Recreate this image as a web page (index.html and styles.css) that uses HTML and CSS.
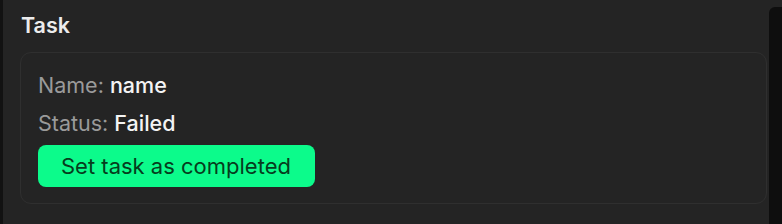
FILE: index.html
```html
<!DOCTYPE html>
<html lang="en">
<head>
    <meta charset="UTF-8">
    <meta name="viewport" content="width=device-width, initial-scale=1.0">
    <title>task</title>
    <link rel="stylesheet" href="styles.css">
</head>
<body>
    <div class="app">
        <div class="edge"></div>
        <div class="panel">
            <h2 class="panel_title">Task</h2>
            <div class="task_card">
                <div class="task_row"><span class="task_label">Name:</span> <span class="task_value">name</span></div>
                <div class="task_row"><span class="task_label">Status:</span> <span class="task_value">Failed</span></div>
                <button class="btn_complete">Set task as completed</button>
            </div>
        </div>
        <div class="scroll_track"></div>
    </div>
</body>
</html>
```

FILE: styles.css
```css
*{margin: 0; padding: 0; box-sizing: border-box;}
body{background: #242424; font-family: Inter, "Noto Sans", sans-serif; height: 224px; overflow: hidden;}
.app{display: flex; height: 224px;}
.edge{width: 3px; flex-shrink: 0; background: #121212;}
.panel{flex: 1; min-width: 0; background: #242424; padding: 12px 2px 0 17px;}
.panel_title{font-size: 21.5px; line-height: 26px; font-weight: 600; color: #ececec; padding-left: 1px; margin-bottom: 14px;}
.task_card{border: 1px solid #2f2f2f; border-radius: 11px; padding: 19px 17px 16px; display: flex; flex-direction: column; align-items: flex-start;}
.task_row{font-size: 21.5px; line-height: 26px; margin-bottom: 12px;}
.task_row:nth-child(2){margin-bottom: 9px;}
.task_label{color: #9a9a9a;}
.task_value{color: #f4f4f4; font-weight: 500;}
.btn_complete{height: 42px; padding: 0 24px 0 23px; border: none; border-radius: 8px; background: #0cfb8b; color: #063d1d; font-family: inherit; font-size: 22px; line-height: 42px; cursor: pointer;}
.scroll_track{width: 13px; flex-shrink: 0; margin-top: 7px; background: #0e0e0e; border-radius: 6px 0 0 0;}
```
